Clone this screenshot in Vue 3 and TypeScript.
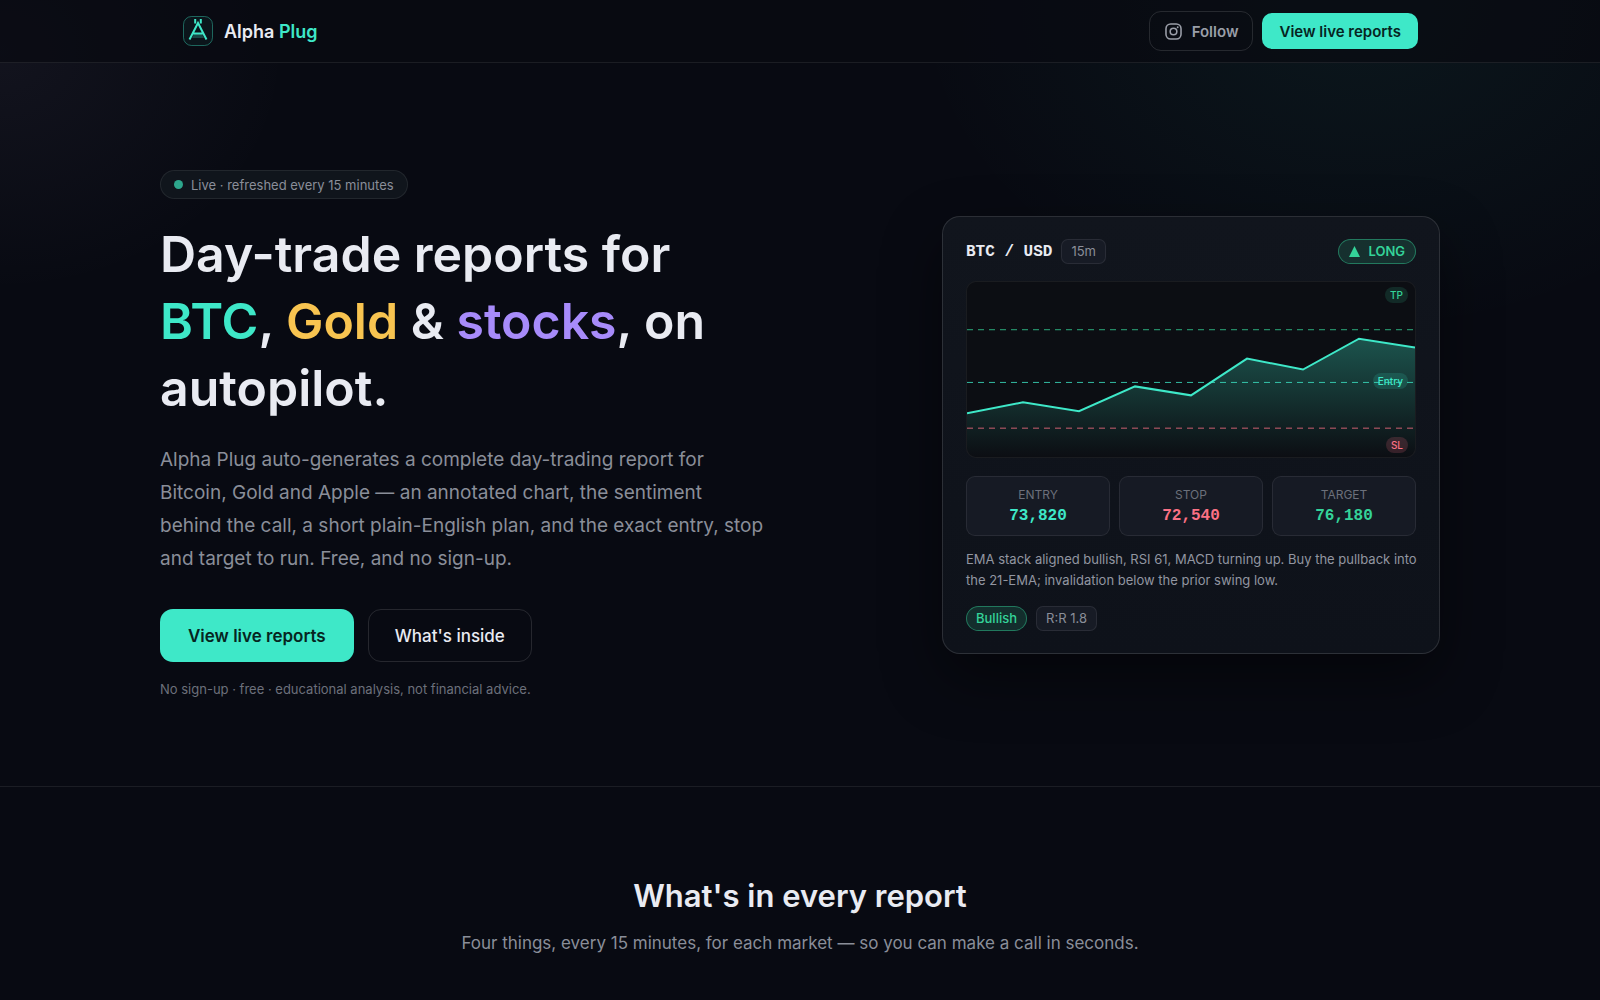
<script setup lang="ts">
interface Level {
  label: string
  value: string
  tone: 'accent' | 'down' | 'up'
}

interface Guide {
  y: number
  tone: 'accent' | 'down' | 'up'
}

const levels: Level[] = [
  { label: 'Entry', value: '73,820', tone: 'accent' },
  { label: 'Stop', value: '72,540', tone: 'down' },
  { label: 'Target', value: '76,180', tone: 'up' },
]

const guides: Guide[] = [
  { y: 48, tone: 'up' },
  { y: 101, tone: 'accent' },
  { y: 147, tone: 'down' },
]

const prices: number[] = [132, 121, 130, 105, 114, 77, 88, 57, 66]
const step = 56
const line = prices.map((y, i) => `${i * step},${y}`).join(' ')
const area = `0,176 ${line} ${(prices.length - 1) * step},176`
</script>

<template>
  <div class="page">
    <header class="topbar">
      <div class="topbar-inner">
        <a class="brand" href="#">
          <svg class="logo" viewBox="0 0 32 32" aria-hidden="true">
            <rect class="logo-frame" x="1.500" y="1.500" width="29" height="29" rx="8" />
            <path class="logo-fill" d="M12.500 18h7l2.500 5H10z" />
            <path class="logo-line" d="M7.500 24.500 L16 8 L24.500 24.500 M11 18.500h10" />
            <path class="logo-prongs" d="M13.200 4v4.500 M18.800 4v4.500" />
          </svg>
          <span class="brand-name">Alpha <span class="accent">Plug</span></span>
        </a>
        <nav class="actions">
          <a class="btn btn-follow" href="#">
            <svg class="insta" viewBox="0 0 24 24" aria-hidden="true">
              <rect x="2.500" y="2.500" width="19" height="19" rx="6" />
              <circle cx="12" cy="12" r="4.200" />
              <circle class="dot-fill" cx="17.300" cy="6.700" r="1.200" />
            </svg>
            Follow
          </a>
          <a class="btn btn-primary btn-small" href="#">View live reports</a>
        </nav>
      </div>
    </header>

    <main>
      <section class="hero">
        <div class="hero-inner">
          <div class="intro">
            <span class="live"><span class="live-dot"></span>Live · refreshed every 15 minutes</span>
            <h1>
              Day-trade reports for <br />
              <span class="accent">BTC</span>, <span class="gold">Gold</span> &amp;
              <span class="violet">stocks</span>, on <br />
              autopilot.
            </h1>
            <p class="lead">
              Alpha Plug auto-generates a complete day-trading report for<br />
              Bitcoin, Gold and Apple — an annotated chart, the sentiment<br />
              behind the call, a short plain-English plan, and the exact entry, stop<br />
              and target to run. Free, and no sign-up.
            </p>
            <div class="cta">
              <a class="btn btn-primary btn-large" href="#">View live reports</a>
              <a class="btn btn-ghost btn-large" href="#inside">What's inside</a>
            </div>
            <p class="note">No sign-up · free · educational analysis, not financial advice.</p>
          </div>

          <article class="card">
            <div class="card-head">
              <span class="pair">BTC / USD</span>
              <span class="chip">15m</span>
              <span class="pill pill-long">
                <svg class="triangle" viewBox="0 0 10 10" aria-hidden="true"><path d="M5 0l5 10H0z" /></svg>
                LONG
              </span>
            </div>

            <div class="chart">
              <svg class="plot" viewBox="0 0 448 176" preserveAspectRatio="none" aria-hidden="true">
                <defs>
                  <linearGradient id="area-fade" x1="0" y1="0" x2="0" y2="1">
                    <stop offset="0" stop-color="#3ee8c8" stop-opacity="0.32" />
                    <stop offset="1" stop-color="#3ee8c8" stop-opacity="0" />
                  </linearGradient>
                </defs>
                <polygon :points="area" fill="url(#area-fade)" />
                <line
                  v-for="guide in guides"
                  :key="guide.y"
                  :class="['guide', guide.tone]"
                  x1="0"
                  :y1="guide.y"
                  x2="448"
                  :y2="guide.y"
                />
                <polyline class="price" :points="line" />
              </svg>
              <span class="tag tag-tp">TP</span>
              <span class="tag tag-entry">Entry</span>
              <span class="tag tag-sl">SL</span>
            </div>

            <dl class="levels">
              <div v-for="level in levels" :key="level.label" class="level">
                <dt>{{ level.label }}</dt>
                <dd :class="level.tone">{{ level.value }}</dd>
              </div>
            </dl>

            <p class="plan">
              EMA stack aligned bullish, RSI 61, MACD turning up. Buy the pullback into<br />
              the 21-EMA; invalidation below the prior swing low.
            </p>

            <div class="chips">
              <span class="pill">Bullish</span>
              <span class="chip">R:R 1.8</span>
            </div>
          </article>
        </div>
      </section>

      <section id="inside" class="inside">
        <h2>What's in every report</h2>
        <p>Four things, every 15 minutes, for each market — so you can make a call in seconds.</p>
      </section>
    </main>
  </div>
</template>

<style>
body {
  margin: 0;
  background: #080a12;
}
</style>

<style scoped>
.page {
  --accent: #3ee8c8;
  --up: #34d399;
  --down: #fb7185;
  --text: #e9ebf2;
  --muted: #8a8e99;
  --faint: #6c707b;
  --line: rgba(255, 255, 255, 0.08);
  min-height: 100vh;
  overflow: hidden;
  box-sizing: border-box;
  color: var(--text);
  font-family: Inter, "Liberation Sans", sans-serif;
  background:
    radial-gradient(560px 420px at 85% 0, rgba(62, 232, 200, 0.06), transparent 80%),
    radial-gradient(360px 300px at 0 5%, rgba(190, 170, 220, 0.06), transparent 80%),
    #080a12;
}

.page * {
  box-sizing: border-box;
}

h1,
h2,
p,
dl,
dd {
  margin: 0;
}

a {
  color: inherit;
  text-decoration: none;
}

.accent {
  color: var(--accent);
}

.gold {
  color: #f8c450;
}

.violet {
  color: #a78bfa;
}

.up {
  color: var(--up);
}

.down {
  color: var(--down);
}

.topbar {
  border-bottom: 1px solid var(--line);
  background: rgba(8, 10, 17, 0.7);
}

.topbar-inner {
  display: flex;
  align-items: center;
  justify-content: space-between;
  max-width: 1280px;
  height: 62px;
  margin: 0 auto;
  padding: 0 22px;
}

.brand {
  display: flex;
  align-items: center;
  gap: 10px;
}

.logo {
  width: 32px;
  height: 32px;
  fill: none;
}

.logo-frame {
  fill: rgba(62, 232, 200, 0.05);
  stroke: rgba(62, 232, 200, 0.4);
}

.logo-fill {
  fill: rgba(62, 232, 200, 0.25);
}

.logo-line,
.logo-prongs {
  stroke: var(--accent);
  stroke-width: 2;
}

.brand-name {
  font-size: 18px;
  font-weight: 600;
}

.actions {
  display: flex;
  align-items: center;
  gap: 9px;
}

.btn {
  display: inline-flex;
  align-items: center;
  justify-content: center;
  border: 1px solid transparent;
  border-radius: 10px;
  font-weight: 600;
  white-space: nowrap;
}

.btn-primary {
  background: var(--accent);
  color: #06251f;
}

.btn-small {
  height: 36px;
  padding: 0 16px;
  font-size: 15px;
}

.btn-follow {
  height: 40px;
  gap: 9px;
  padding: 0 14px;
  border-color: rgba(255, 255, 255, 0.12);
  border-radius: 12px;
  color: #9a9ea8;
  font-size: 15px;
}

.insta {
  width: 19px;
  height: 19px;
  fill: none;
  stroke: currentColor;
  stroke-width: 2;
}

.insta .dot-fill {
  fill: currentColor;
  stroke: none;
}

.btn-large {
  height: 53px;
  padding: 0 27px;
  border-radius: 13px;
  font-size: 17px;
}

.btn-ghost {
  padding: 0 26px;
  border-color: rgba(255, 255, 255, 0.12);
  color: var(--text);
  font-weight: 500;
}

.hero {
  border-bottom: 1px solid var(--line);
}

.hero-inner {
  display: grid;
  grid-template-columns: minmax(0, 1fr) minmax(0, 498px);
  align-items: center;
  gap: 48px;
  max-width: 1280px;
  margin: 0 auto;
  padding: 107px 0 87px;
}

.live {
  display: inline-flex;
  align-items: center;
  gap: 8px;
  height: 29px;
  padding: 0 13px;
  border: 1px solid var(--line);
  border-radius: 15px;
  background: #10151c;
  color: var(--muted);
  font-size: 13px;
  vertical-align: top;
}

.live-dot {
  width: 9px;
  height: 9px;
  border-radius: 50%;
  background: #2da68c;
}

h1 {
  margin-top: 22px;
  font-size: 50px;
  font-weight: 600;
  line-height: 67px;
}

.lead {
  margin-top: 21px;
  color: var(--muted);
  font-size: 19px;
  line-height: 33px;
}

.cta {
  display: flex;
  gap: 14px;
  margin-top: 34px;
}

.note {
  margin-top: 17px;
  color: var(--faint);
  font-size: 13px;
  line-height: 20px;
}

.card {
  padding: 22px 23px;
  border: 1px solid rgba(255, 255, 255, 0.12);
  border-radius: 18px;
  background: linear-gradient(180deg, #11151d, #0e121a);
  box-shadow: 0 24px 60px rgba(0, 0, 0, 0.45);
}

.card-head {
  display: flex;
  align-items: center;
  gap: 9px;
  height: 25px;
}

.pair {
  padding-top: 2px;
  font-family: "Liberation Mono", monospace;
  font-size: 16px;
  font-weight: 700;
  line-height: 23px;
}

.chip,
.pill {
  display: inline-flex;
  align-items: center;
  height: 25px;
  padding: 0 9px;
  border: 1px solid var(--line);
  border-radius: 7px;
  background: #171b25;
  color: var(--muted);
  font-size: 13px;
}

.pill {
  border-color: rgba(52, 211, 153, 0.45);
  border-radius: 13px;
  background: rgba(52, 211, 153, 0.15);
  color: var(--up);
  font-weight: 500;
}

.pill-long {
  gap: 8px;
  margin-left: auto;
  padding: 0 10px;
  font-weight: 600;
}

.triangle {
  width: 11px;
  height: 11px;
  fill: currentColor;
}

.chart {
  position: relative;
  margin-top: 17px;
  overflow: hidden;
  border: 1px solid rgba(255, 255, 255, 0.06);
  border-radius: 10px;
  background: #0c0e13;
}

.plot {
  display: block;
  width: 100%;
  height: 175px;
}

.guide {
  stroke: currentColor;
  stroke-dasharray: 6 5;
  stroke-width: 1;
  opacity: 0.8;
}

.price {
  fill: none;
  stroke: var(--accent);
  stroke-width: 2;
}

.tag {
  position: absolute;
  right: 7px;
  padding: 0 5px;
  border-radius: 8px;
  font-size: 10px;
  font-weight: 500;
  line-height: 16px;
}

.tag-tp {
  top: 5px;
  background: rgba(52, 211, 153, 0.15);
  color: var(--up);
}

.tag-entry {
  top: 91px;
  background: rgba(62, 232, 200, 0.15);
  color: var(--accent);
}

.tag-sl {
  bottom: 4px;
  background: rgba(251, 113, 133, 0.18);
  color: var(--down);
}

.levels {
  display: grid;
  grid-template-columns: repeat(3, 1fr);
  gap: 9px;
  margin-top: 18px;
}

.level {
  height: 60px;
  padding: 9px 0;
  border: 1px solid var(--line);
  border-radius: 9px;
  background: #161a24;
  text-align: center;
}

.level dt {
  color: var(--faint);
  font-size: 12px;
  line-height: 18px;
  text-transform: uppercase;
}

.level dd {
  font-family: "Liberation Mono", monospace;
  font-size: 16px;
  font-weight: 700;
  line-height: 25px;
}

.plan {
  margin-top: 13px;
  color: #9296a1;
  font-size: 13px;
  line-height: 21px;
  white-space: nowrap;
}

.chips {
  display: flex;
  gap: 9px;
  margin-top: 15px;
}

.inside {
  padding: 88px 24px;
  text-align: center;
}

h2 {
  font-size: 31px;
  font-weight: 600;
  line-height: 42px;
}

.inside p {
  margin-top: 12px;
  color: var(--muted);
  font-size: 17px;
  line-height: 28px;
}
</style>
